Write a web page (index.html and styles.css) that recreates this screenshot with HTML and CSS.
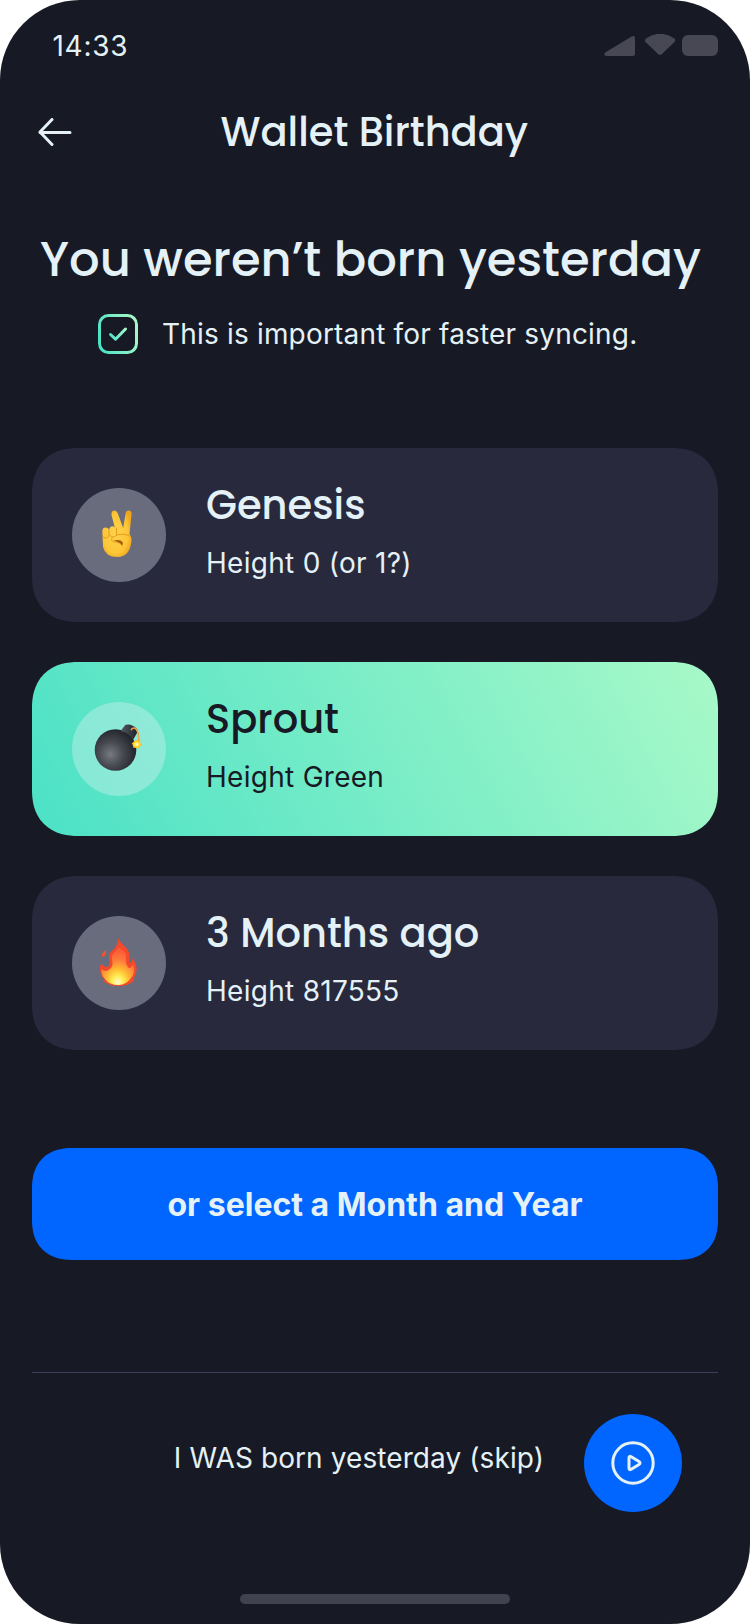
FILE: index.html
```html
<!DOCTYPE html>
<html lang="en">
<head>
<meta charset="utf-8">
<title>Wallet Birthday</title>
<link rel="stylesheet" href="styles.css">
</head>
<body>
<main class="screen">
  <div class="status">
    <span class="time">14:33</span>
    <svg class="status-icons" width="114" height="24" viewBox="0 0 114 24">
      <path d="M1.2 18.4 27.6 2.6Q31 1 31 4.500V19.500Q31 22 28.500 22H2.500Q-1 21.500 1.200 18.400Z"/>
      <path d="M42 4.500Q56 -5 70.500 4.500Q72 6 70.500 8L58 20Q56 22 54 20L41.500 8Q40 6 42 4.500Z"/>
      <rect x="78" y="1" width="36" height="21" rx="6"/>
    </svg>
  </div>
  <header class="nav">
    <svg class="back" width="34" height="28" viewBox="0 0 34 28"><path d="M14 1.500 2 14 14 26.500M2 14.500H32"/></svg>
    <h1 class="nav-title">Wallet Birthday</h1>
  </header>
  <h2 class="headline">You weren’t born yesterday</h2>
  <div class="note">
    <svg class="check" width="40" height="40" viewBox="0 0 40 40">
      <defs><linearGradient id="mint" gradientUnits="userSpaceOnUse" x1="0" y1="26" x2="40" y2="14"><stop stop-color="#4be1c6"/><stop offset="1" stop-color="#a8f9c8"/></linearGradient>
      <linearGradient id="tick" gradientUnits="userSpaceOnUse" x1="11" y1="22" x2="29" y2="17"><stop stop-color="#4be1c6"/><stop offset="1" stop-color="#a8f9c8"/></linearGradient></defs>
      <rect x="1.5" y="1.500" width="37" height="37" rx="9" stroke="url(#mint)"/>
      <path d="M12.500 20.500 17.500 25.200 27.500 15" stroke="url(#tick)"/>
    </svg>
    <span class="note-text">This is important for faster syncing.</span>
  </div>
  <section class="options">
    <article class="card">
      <div class="badge">
        <svg width="48" height="48" viewBox="0 0 48 48">
          <defs><radialGradient id="skin" cx=".45" cy=".5" r=".6"><stop stop-color="#ffd24d"/><stop offset=".7" stop-color="#fdc637"/><stop offset="1" stop-color="#efa51d"/></radialGradient></defs>
          <path d="M22 22 17.500 5Q17 1 20 .5Q23 .5 24 4L29.200 18 31.500 4Q32 .5 35 .6Q38 1 37.500 5L35.500 24Q38.500 28 37 34Q35 46.500 23.500 47Q11.500 47 9 37L8.300 21Q8.500 17.500 12 17.600Q14.500 18 15 20Q15.500 16 19 16.200Q21.500 17 22 20Z" fill="url(#skin)"/>
          <path d="M15 20V26Q11.500 30 8.800 26.500M15.500 25Q17 28 20.500 27L22.500 25V18M22.500 25Q30.500 23 35.500 26M18 28Q16.500 31 20.500 32Q26.500 32 28.500 36" fill="none" stroke="#e39d1b" stroke-width="1" stroke-linecap="round"/>
          <path d="M19.500 30.500Q27.500 29 29 33Q28.500 37 26.500 33.500Q23.500 31.500 19.500 30.500Z" fill="#a65d0b"/>
        </svg>
      </div>
      <div class="copy"><h3 class="title">Genesis</h3><p class="sub">Height 0 (or 1?)</p></div>
    </article>
    <article class="card selected">
      <div class="badge">
        <svg width="48" height="48" viewBox="0 0 48 48">
          <defs><radialGradient id="ball" cx=".38" cy=".6" r=".62"><stop stop-color="#777b80"/><stop offset=".5" stop-color="#45484f"/><stop offset="1" stop-color="#23252d"/></radialGradient>
          <linearGradient id="cap"><stop stop-color="#555961"/><stop offset="1" stop-color="#202229"/></linearGradient>
          <radialGradient id="spark"><stop stop-color="#fff"/><stop offset=".4" stop-color="#ffe43b"/><stop offset="1" stop-color="#ffac1c"/></radialGradient></defs>
          <circle cx="21.500" cy="26" r="20.800" fill="url(#ball)"/>
          <path d="M26.500 7 31.500 .8Q37.500 -1 43 5Q44 7 43 9L39 16Q36 9 26.500 7Z" fill="url(#cap)"/>
          <path d="M37 6C40 1 46 5 44.500 20" fill="none" stroke="#f2a24b" stroke-width="1.600"/>
          <circle cx="42.500" cy="20.300" r="3.800" fill="url(#spark)"/>
          <path d="M41.500 15.500 43.500 17 46.500 16.500 46 19 48 21 45.500 22.500 44 25 42 23.500 39 23.500 39.200 21 37.500 19 40.500 18.500Z" fill="url(#spark)"/>
        </svg>
      </div>
      <div class="copy"><h3 class="title">Sprout</h3><p class="sub">Height Green</p></div>
    </article>
    <article class="card">
      <div class="badge">
        <svg width="48" height="48" viewBox="0 0 48 48">
          <defs><radialGradient id="flame" cx=".5" cy=".93" r=".85"><stop stop-color="#fff9cf"/><stop offset=".2" stop-color="#ffed55"/><stop offset=".42" stop-color="#ffba32"/><stop offset=".7" stop-color="#ff7a3c"/><stop offset="1" stop-color="#fa5c35"/></radialGradient></defs>
          <path d="M24 0C26 6 34 9 35 15Q36 20 35 25Q38 25 38.500 20C42 26 44 29 41.500 36Q41 39 39 41L40 43Q34 48 25 48Q15 48 9 43L11 42Q6 38 6 31Q6 27 7.500 25Q9 29 14 29Q16 27 15.500 24C14 17 16 14 20 11Q24 7 24 0Z" fill="#f4492a"/>
          <path d="M24 9C28 12 32 13 32 19Q31 27 35 30Q38 30 39 26Q42 34 37 40Q32 47 25 47Q15 47 11 41Q7 37 7.500 31Q11 35 16 31Q20 27 18 22Q17 16 23 12Z" fill="url(#flame)"/>
          <path d="M12 12Q13 15 10.500 18L8 19Q7 15 12 12Z" fill="#f3532d"/>
        </svg>
      </div>
      <div class="copy"><h3 class="title">3 Months ago</h3><p class="sub">Height 817555</p></div>
    </article>
  </section>
  <button class="select">or select a Month and Year</button>
  <footer class="footer">
    <span class="skip">I WAS born yesterday (skip)</span>
    <button class="play" aria-label="Skip">
      <svg width="44" height="44" viewBox="0 0 44 44"><circle cx="22" cy="22" r="20.200"/><path d="M18 17V27Q18 29.500 20.200 28.300L28 23.500Q30 22 28 20.500L20.200 15.700Q18 14.500 18 17Z"/></svg>
    </button>
  </footer>
  <div class="home"></div>
</main>
</body>
</html>
```
FILE: styles.css
```css
* { box-sizing: border-box; }
body { margin: 0; background: #fff; font-family: Poppins, Inter, "Liberation Sans", sans-serif; color: #e4f1f6; }
h1, h2, h3, p { margin: 0; font-weight: 500; white-space: nowrap; }
button { border: 0; padding: 0; font: inherit; color: inherit; }
svg { display: block; flex: none; }
.time, .note-text, .sub, .select, .skip { font-family: Inter, "Liberation Sans", sans-serif; }
.screen { width: 750px; height: 1624px; padding: 0 32px; background: #171925; border-radius: 80px; overflow: hidden; display: flex; flex-direction: column; }
.status { height: 92px; padding: 34px 0 0 20.5px; display: flex; justify-content: space-between; }
.time { font-size: 28px; line-height: 24px; letter-spacing: .7px; }
.status-icons { fill: #484754; }
.nav { height: 80px; padding-left: 6px; display: flex; align-items: center; }
.back { fill: none; stroke: #e4f1f6; stroke-width: 3; stroke-linecap: round; stroke-linejoin: round; }
.nav-title { margin-left: 148.5px; font-size: 40px; line-height: 60px; }
.headline { margin-top: 52px; height: 72px; padding-left: 8px; font-size: 48px; line-height: 71px; }
.note { margin: 18px 0 0 66px; height: 40px; display: flex; align-items: center; gap: 24px; }
.check { fill: none; stroke-width: 3; stroke-linecap: round; stroke-linejoin: round; }
.note-text { font-size: 28px; white-space: nowrap; letter-spacing: .18px; }
.options { margin-top: 94px; display: flex; flex-direction: column; gap: 40px; }
.card { height: 174px; padding: 0 40px; border-radius: 42px; background: #28293d; display: flex; align-items: center; gap: 40px; }
.selected { background: linear-gradient(62deg, #4be1c6, #a8f9c8); color: #171925; }
.badge { width: 94px; height: 94px; border-radius: 50%; background: #696c7d; display: flex; align-items: center; justify-content: center; padding: 0 3px 3px 0; }
.selected .badge { background: rgba(228, 241, 246, .36); }
.copy { padding-bottom: 12px; }
.title { font-size: 40px; line-height: 60px; }
.sub { font-size: 28px; line-height: 40px; margin-top: 8px; font-weight: 400; letter-spacing: .28px; }
.select { margin-top: 98px; height: 112px; border-radius: 34px; background: #0066ff; font-size: 32px; font-weight: 700; }
.footer { margin-top: 112px; height: 182px; padding: 41px 36px 0 0; border-top: 1px solid #3d3e5c; display: flex; justify-content: flex-end; gap: 40px; }
.skip { font-size: 28px; line-height: 88px; white-space: nowrap; letter-spacing: .09px; }
.play { width: 98px; height: 98px; border-radius: 50%; background: #0066ff; display: flex; align-items: center; justify-content: center; }
.play svg { fill: none; stroke: #e4f1f6; stroke-width: 3; stroke-linejoin: round; }
.home { width: 270px; height: 10px; margin: 40px auto 0; border-radius: 5px; background: #41424f; }
@supports (corner-shape: superellipse(1.2)) {
  .card { border-radius: 46px; corner-shape: superellipse(1.2); }
  .select { border-radius: 40px; corner-shape: superellipse(1.2); }
}
```
